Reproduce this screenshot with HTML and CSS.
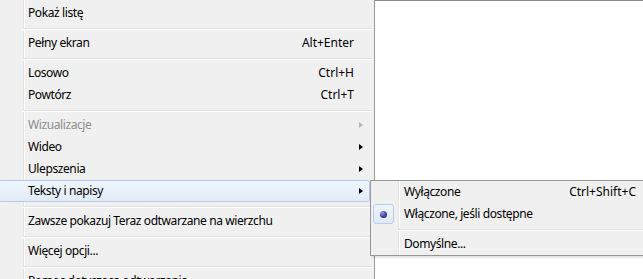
FILE: index.html
```html
<!DOCTYPE html>
<html lang="pl">
<head>
    <meta charset="UTF-8">
    <title>Teraz odtwarzane - menu</title>
    <link rel="stylesheet" href="styles.css">
</head>
<body>
    <div class="screen">
        <div class="menu">
            <div class="item"><span class="label">Pokaż listę</span></div>
            <div class="sep"></div>
            <div class="item"><span class="label">Pełny ekran</span><span class="key">Alt+Enter</span></div>
            <div class="sep"></div>
            <div class="item"><span class="label">Losowo</span><span class="key">Ctrl+H</span></div>
            <div class="item"><span class="label">Powtórz</span><span class="key">Ctrl+T</span></div>
            <div class="sep"></div>
            <div class="item disabled"><span class="label">Wizualizacje</span><span class="arrow"></span></div>
            <div class="item"><span class="label">Wideo</span><span class="arrow"></span></div>
            <div class="item"><span class="label">Ulepszenia</span><span class="arrow"></span></div>
            <div class="item active"><span class="label">Teksty i napisy</span><span class="arrow"></span></div>
            <div class="sep"></div>
            <div class="item"><span class="label">Zawsze pokazuj Teraz odtwarzane na wierzchu</span></div>
            <div class="sep"></div>
            <div class="item"><span class="label">Więcej opcji...</span></div>
            <div class="sep"></div>
            <div class="item"><span class="label">Pomoc dotycząca odtwarzania...</span></div>
        </div>
        <div class="backdrop"></div>

        <div class="submenu">
            <div class="item"><span class="mark"></span><span class="label">Wyłączone</span><span class="key">Ctrl+Shift+C</span></div>
            <div class="item"><span class="mark checked"><span class="bullet"></span></span><span class="label">Włączone, jeśli dostępne</span></div>
            <div class="sep"></div>
            <div class="item"><span class="mark"></span><span class="label">Domyślne...</span></div>
        </div>
    </div>
</body>
</html>
```

FILE: styles.css
```css
body {
    margin: 0;
    padding: 0;
    background-color: #ffffff;
    font-family: "Noto Sans", "Open Sans", sans-serif;
    font-size: 12px;
    color: #000;
}
.screen {
    position: relative;
    display: flex;
    width: 643px;
    height: 279px;
    overflow: hidden;
}
.menu {
    flex: none;
    width: 378px;
    margin-left: -5px;
    padding-top: 2px;
    background-color: #f0f0f0;
    background-image: linear-gradient(to right, transparent 27px, #e2e3e3 27px, #e2e3e3 28px, #fff 28px, #fff 29px, transparent 29px);
    border-left: 1px solid #979797;
    border-right: 1px solid #979797;
}
.backdrop {
    flex: 1;
    border-top: 1px solid #8c8c8c;
    background-color: #fff;
}
.item {
    display: grid;
    grid-template-columns: 1fr auto 15px;
    align-items: center;
    height: 20px;
    line-height: 20px;
    margin: 0 4px 0 2px;
    padding: 0 0 0 29px;
    border: 1px solid transparent;
    border-radius: 3px;
    white-space: nowrap;
}
.item .label {
    grid-column: 1;
    letter-spacing: -0.4px;
}
.item .key {
    grid-column: 2;
}
.item .arrow {
    grid-column: 3;
    width: 0;
    height: 0;
    margin-left: 5px;
    border-left: 4px solid #000;
    border-top: 3.5px solid transparent;
    border-bottom: 3.5px solid transparent;
}
.item.disabled {
    color: #8d8d8d;
}
.item.disabled .arrow {
    border-left-color: #b4b4b4;
}
.item.active {
    border-color: #b2cbea;
    background: linear-gradient(#f0f5fc, #e1ebf8);
}
.sep {
    height: 0;
    margin: 4px 2px 2px 27px;
    border-top: 1px solid #e0e0e0;
    border-bottom: 1px solid #ffffff;
}

.submenu {
    position: absolute;
    left: 370px;
    top: 180px;
    width: 290px;
    background-color: #f0f0f0;
    background-image: linear-gradient(to right, transparent 27px, #e2e3e3 27px, #e2e3e3 28px, #fff 28px, #fff 29px, transparent 29px);
    border: 1px solid #979797;
    box-shadow: 2px 2px 2px rgba(0, 0, 0, 0.12);
}
.submenu .item {
    grid-template-columns: 30px 1fr auto 20px;
    padding-left: 0;
}
.submenu .item .label {
    grid-column: 2;
}
.submenu .item .key {
    grid-column: 3;
}
.mark {
    grid-column: 1;
    display: flex;
    align-items: center;
    justify-content: center;
    box-sizing: border-box;
    width: 21px;
    height: 20px;
    margin-left: -1px;
    border-radius: 3px;
}
.mark.checked {
    border: 1px solid #b8cdea;
    background: linear-gradient(#eef4fc, #dfe9f7);
}
.bullet {
    width: 7px;
    height: 7px;
    border-radius: 50%;
    background: radial-gradient(circle at 35% 30%, #9c9fe0, #3b3e9c 55%, #1d1f66);
}
```
